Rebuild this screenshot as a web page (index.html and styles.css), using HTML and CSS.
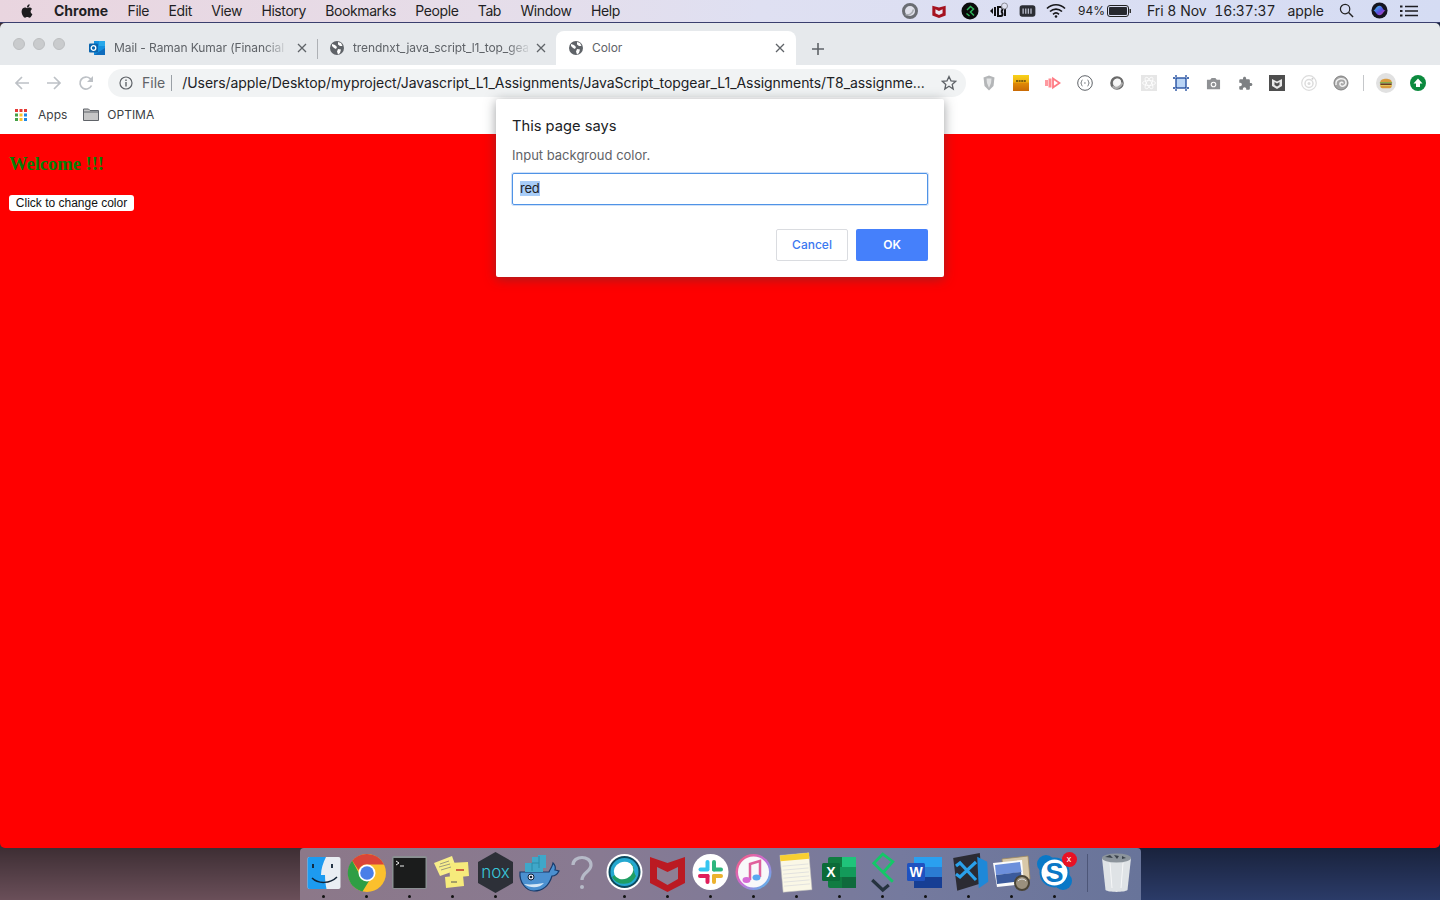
FILE: index.html
```html
<!DOCTYPE html>
<html lang="en">
<head>
<meta charset="utf-8">
<title>Color</title>
<link rel="stylesheet" href="styles.css">
</head>
<body>
<header class="menubar">
  <svg class="apple" viewBox="0 0 24 24" width="16" height="16"><path fill="#1c1c1e" d="M18.71 19.5c-.83 1.24-1.71 2.45-3.05 2.47-1.34.03-1.77-.79-3.29-.79-1.53 0-2 .77-3.27.82-1.31.05-2.3-1.32-3.14-2.53C4.25 17 2.94 12.45 4.7 9.39c.87-1.52 2.43-2.48 4.12-2.51 1.28-.02 2.5.87 3.29.87.78 0 2.26-1.07 3.81-.91.65.03 2.47.26 3.64 1.98-.09.06-2.17 1.28-2.15 3.81.03 3.02 2.65 4.03 2.68 4.04-.03.07-.42 1.44-1.38 2.83M13 3.5c.73-.83 1.94-1.46 2.94-1.5.13 1.17-.34 2.35-1.04 3.19-.69.85-1.83 1.51-2.95 1.42-.15-1.15.41-2.35 1.05-3.11z"/></svg>
  <nav class="menus">
    <span class="menu-app">Chrome</span><span>File</span><span>Edit</span><span>View</span><span>History</span><span>Bookmarks</span><span>People</span><span>Tab</span><span>Window</span><span>Help</span>
  </nav>
  <div class="status">
    <svg class="st st-ring" viewBox="0 0 18 18" width="18" height="18"><circle cx="9" cy="9" r="6.5" fill="#dfe0ea" stroke="#6a6d73" stroke-width="3"/><path d="M4.500 12.500c3 1 7-.5 8-5" fill="none" stroke="#a9acb2" stroke-width="1.500"/></svg>
    <svg class="st st-mc" viewBox="0 0 18 18" width="16" height="18"><path fill="#a5121f" d="M1.5 3 9 5l7.5-2v11L9 17l-7.5-3z"/><path fill="#e9e4f0" d="M5 7l4 2 4-2v4.500l-4 2-4-2z"/></svg>
    <svg class="st st-s" viewBox="0 0 18 18" width="18" height="18"><circle cx="9" cy="9" r="8.5" fill="#0b0b0b"/><path d="M6 8 9.500 4.500 12.500 7 9.500 10 13 13.500M5.500 11.500 8.500 14" fill="none" stroke="#2fb45a" stroke-width="1.500"/></svg>
    <svg class="st st-bt" viewBox="0 0 20 18" width="20" height="18"><path d="M1 9l3-3v6z" fill="#111"/><rect x="5" y="5" width="2" height="9" fill="#111"/><path d="M9 5h3c2 0 2 4 0 4.500 2 .5 2 4.500 0 4.500H9zM11 9.500v0" fill="none" stroke="#111" stroke-width="2"/><path d="M16 6v8" stroke="#111" stroke-width="2"/><circle cx="15.500" cy="4" r="3" fill="#dfe1f0" stroke="#8a8a94"/></svg>
    <svg class="st st-mem" viewBox="0 0 20 16" width="19" height="14"><rect x="1" y="1.500" width="18" height="13" rx="3" fill="#2b2d33"/><path d="M5 5v6M8 5v6M11 5v6M14 5v6" stroke="#b9bccb" stroke-width="1.500"/></svg>
    <svg class="st st-wifi" viewBox="0 0 20 15" width="20" height="15"><path d="M1 5.500c5-5 13-5 18 0M4 8.500c3.500-3.300 8.500-3.300 12 0M7 11.300c1.700-1.500 4.300-1.500 6 0" fill="none" stroke="#17171a" stroke-width="1.700"/><circle cx="10" cy="13.500" r="1.300" fill="#17171a"/></svg>
    <span class="st-pct">94%</span>
    <svg class="st st-bat" viewBox="0 0 24 12" width="24" height="12"><rect x=".5" y=".5" width="21" height="11" rx="2.500" fill="none" stroke="#222"/><rect x="2" y="2" width="18" height="8" rx="1" fill="#26282e"/><rect x="22.500" y="4" width="1.500" height="4" fill="#333"/></svg>
    <span class="st-date">Fri 8 Nov</span>
    <span class="st-time">16:37:37</span>
    <span class="st-user">apple</span>
    <svg class="st st-search" viewBox="0 0 16 16" width="15" height="15"><circle cx="6.500" cy="6.500" r="5" fill="none" stroke="#222" stroke-width="1.300"/><path d="M10.200 10.200 15 15" stroke="#222" stroke-width="1.500"/></svg>
    <svg class="st st-siri" viewBox="0 0 18 18" width="17" height="17"><defs><linearGradient id="siri" x1="0" y1="0" x2="1" y2="1"><stop offset="0" stop-color="#3fd0f0"/><stop offset=".55" stop-color="#5a50e0"/><stop offset="1" stop-color="#e23fa8"/></linearGradient></defs><circle cx="9" cy="9" r="8.500" fill="#15151f"/><path d="M2.500 9c2 0 3-5 6.500-5s3 5 6.500 5c-2 0-3 5-6.500 5s-4.500-5-6.500-5z" fill="url(#siri)"/></svg>
    <svg class="st st-list" viewBox="0 0 18 14" width="18" height="14"><path d="M5 2.500h13M5 7h13M5 11.500h13" stroke="#1d1d22" stroke-width="1.700"/><path d="M0 2.500h2.500M0 7h2.500M0 11.500h2.500" stroke="#1d1d22" stroke-width="1.900"/></svg>
  </div>
</header>

<main class="window">
  <div class="tabstrip">
    <div class="lights"><i></i><i></i><i></i></div>
    <div class="tab tab-first">
      <svg class="fav" viewBox="0 0 16 16" width="16" height="16"><rect x="5" y="1" width="11" height="14" fill="#1490df"/><rect x="10" y="1" width="6" height="5" fill="#28a8ea"/><path d="M5 15 16 8v7z" fill="#0f6cbd"/><rect y="3.500" width="9" height="9" rx="1" fill="#0a64ad"/><circle cx="4.500" cy="8" r="2.300" fill="none" stroke="#fff" stroke-width="1.300"/></svg>
      <span class="tab-title">Mail - Raman Kumar (Financial</span>
      <svg class="tab-x" viewBox="0 0 10 10" width="10" height="10"><path d="M1 1l8 8M9 1 1 9"/></svg>
    </div>
    <div class="tab tab-sep">
      <svg class="fav" viewBox="0 0 16 16" width="16" height="16"><circle cx="8" cy="8" r="7" fill="#5f6368"/><path d="M3 4l3 1 2 2-1 2-2-1-2-2zM9 9l3 .5-1 3.500-2 1.500-1-3zM9 2l3 1 1.500 3H11L9 4.500z" fill="#fff"/></svg>
      <span class="tab-title">trendnxt_java_script_l1_top_gea</span>
      <svg class="tab-x" viewBox="0 0 10 10" width="10" height="10"><path d="M1 1l8 8M9 1 1 9"/></svg>
    </div>
    <div class="tab tab-active">
      <svg class="fav" viewBox="0 0 16 16" width="16" height="16"><circle cx="8" cy="8" r="7" fill="#5f6368"/><path d="M3 4l3 1 2 2-1 2-2-1-2-2zM9 9l3 .5-1 3.500-2 1.500-1-3zM9 2l3 1 1.500 3H11L9 4.500z" fill="#fff"/></svg>
      <span class="tab-title tab-title-full">Color</span>
      <svg class="tab-x" viewBox="0 0 10 10" width="10" height="10"><path d="M1 1l8 8M9 1 1 9"/></svg>
    </div>
    <svg class="newtab" viewBox="0 0 12 12" width="12" height="12"><path d="M6 0v12M0 6h12" stroke="#5f6368" stroke-width="1.600"/></svg>
  </div>

  <div class="toolbar">
    <svg class="nav" viewBox="0 0 16 16" width="16" height="16"><path d="M15 8H2M8 2 2 8l6 6" fill="none" stroke="#bdc1c6" stroke-width="1.700"/></svg>
    <svg class="nav" viewBox="0 0 16 16" width="16" height="16"><path d="M1 8h13M8 2l6 6-6 6" fill="none" stroke="#bdc1c6" stroke-width="1.700"/></svg>
    <svg class="nav" viewBox="0 0 16 16" width="16" height="16"><path d="M13.500 10.500A6 6 0 1 1 12.200 3.700L14 5.500" fill="none" stroke="#bdc1c6" stroke-width="1.700"/><path d="M15 1v6H9z" fill="#bdc1c6"/></svg>
    <div class="omnibox">
      <svg class="info" viewBox="0 0 14 14" width="14" height="14"><circle cx="7" cy="7" r="6" fill="none" stroke="#5f6368" stroke-width="1.200"/><path d="M7 6v4.500M7 3.500v1.500" stroke="#5f6368" stroke-width="1.400"/></svg>
      <span class="scheme">File</span>
      <span class="url">/Users/apple/Desktop/myproject/Javascript_L1_Assignments/JavaScript_topgear_L1_Assignments/T8_assignme...</span>
      <svg class="star" viewBox="0 0 16 16" width="16" height="16"><path d="M8 1.500l2 4.300 4.700.5-3.500 3.200 1 4.600L8 11.300l-4.200 2.800 1-4.600L1.300 6.300 6 5.800z" fill="none" stroke="#5f6368" stroke-width="1.300"/></svg>
    </div>
    <div class="exts">
      <span class="ext"><svg viewBox="0 0 16 16" width="16" height="16"><path d="M2.500 2.500 8 .5l5.500 2-1 8.500L8 15.500 3.500 11z" fill="#b4b6b8"/><path d="M5.500 3.500h5l-.5 4.500L8 13 6 8z" fill="#e2e3e4"/></svg></span>
      <span class="ext"><svg viewBox="0 0 16 16" width="16" height="16"><defs><linearGradient id="dor" x1="0" y1="0" x2="0" y2="1"><stop offset="0" stop-color="#f7d21a"/><stop offset=".45" stop-color="#f0b010"/><stop offset=".5" stop-color="#e08a08"/><stop offset="1" stop-color="#c96a05"/></linearGradient></defs><rect width="16" height="16" fill="url(#dor)"/><path d="M3 6h10" stroke="#5a4210" stroke-width="1.600" stroke-dasharray="2 .6"/></svg></span>
      <span class="ext"><svg viewBox="0 0 16 16" width="16" height="16"><path d="M0 5h3v6H0z" fill="#ff9aa0"/><path d="M3.500 3.500h3v9h-3z" fill="#ff8b92"/><path d="M8 3.500l6.500 4.500L8 12.500z" fill="none" stroke="#ff7b84" stroke-width="1.800"/></svg></span>
      <span class="ext"><svg viewBox="0 0 16 16" width="16" height="16"><circle cx="8" cy="8" r="7.300" fill="none" stroke="#5f6368" stroke-width="1"/><path d="M5.500 5C4 5 5 8 3.700 8 5 8 4 11 5.500 11M10.500 5C12 5 11 8 12.300 8 11 8 12 11 10.500 11" fill="none" stroke="#5f6368" stroke-width=".9"/><path d="M7 8h2" stroke="#5f6368" stroke-dasharray=".8 .6"/></svg></span>
      <span class="ext"><svg viewBox="0 0 16 16" width="16" height="16"><circle cx="8" cy="8" r="5.500" fill="#eee" stroke="#6a6a6a" stroke-width="2.600"/><path d="M3.500 11.500c3 3 8.500 1 9.500-4" fill="none" stroke="#adadad" stroke-width="2.200"/><circle cx="8.500" cy="7" r="3.500" fill="#f7f7f7"/></svg></span>
      <span class="ext"><svg viewBox="0 0 16 16" width="16" height="16"><rect width="16" height="16" fill="#e6e6e6"/><g fill="none" stroke="#fff" stroke-width=".8"><ellipse cx="8" cy="8" rx="6.500" ry="2.500"/><ellipse cx="8" cy="8" rx="6.500" ry="2.500" transform="rotate(60 8 8)"/><ellipse cx="8" cy="8" rx="6.500" ry="2.500" transform="rotate(120 8 8)"/></g></svg></span>
      <span class="ext"><svg viewBox="0 0 16 16" width="16" height="16"><rect x="3" y="3" width="10" height="10" fill="#b9d4f5" stroke="#17459b" stroke-width="1.300"/><path d="M3 0v2M13 0v2M3 14v2M13 14v2M0 3h2M14 3h2M0 13h2M14 13h2" stroke="#17459b" stroke-width="1.300"/></svg></span>
      <span class="ext"><svg viewBox="0 0 16 16" width="15" height="15"><path d="M1 4h3.500L6 2h4l1.500 2H15v10H1z" fill="#8f9194"/><circle cx="8" cy="9" r="3" fill="#fff"/><circle cx="8" cy="9" r="1.800" fill="#8f9194"/></svg></span>
      <span class="ext"><svg viewBox="0 0 24 24" width="15" height="15"><path fill="#7d8083" d="M20.500 11H19V7c0-1.100-.9-2-2-2h-4V3.500C13 2.120 11.880 1 10.500 1S8 2.120 8 3.500V5H4c-1.100 0-1.990.9-1.990 2v3.800H3.500c1.490 0 2.700 1.210 2.700 2.700s-1.210 2.700-2.700 2.700H2V20c0 1.100.9 2 2 2h3.800v-1.500c0-1.490 1.210-2.700 2.700-2.700 1.490 0 2.700 1.210 2.700 2.700V22H17c1.100 0 2-.9 2-2v-4h1.500c1.380 0 2.500-1.120 2.500-2.500S21.880 11 20.500 11z"/></svg></span>
      <span class="ext"><svg viewBox="0 0 16 16" width="16" height="16"><rect width="16" height="16" fill="#4e4e4e"/><path d="M3 4l5 2.500L13 4v7l-5 3-5-3z" fill="#e8e8e8"/><path d="M5.500 7 8 8.500 10.500 7v3L8 11.500 5.500 10z" fill="#4e4e4e"/></svg></span>
      <span class="ext"><svg viewBox="0 0 16 16" width="16" height="16"><circle cx="8" cy="8" r="7.300" fill="#fff" stroke="#dcdcdc" stroke-width="1.200"/><circle cx="8" cy="8.500" r="4" fill="none" stroke="#dcdcdc" stroke-width="1.500"/><circle cx="8" cy="8.500" r="1.500" fill="#dcdcdc"/><circle cx="11.500" cy="3.800" r="1" fill="#cfcfcf"/></svg></span>
      <span class="ext"><svg viewBox="0 0 16 16" width="16" height="16"><circle cx="8" cy="8" r="7" fill="#a6a6a6" stroke="#808080" stroke-width="1"/><path d="M3 10c-1-7 9-8.500 10-3 .5 4-5 6-6 2.500-.5-2.500 3-3 3-1" fill="none" stroke="#f2f2f2" stroke-width="1.500"/></svg></span>
      <i class="ext-sep"></i>
      <span class="avatar"><svg viewBox="0 0 16 16" width="14" height="14"><path d="M1.500 7C1.500 2 14.500 2 14.500 7z" fill="#d99a3c"/><rect x="1" y="7" width="14" height="1.500" fill="#7ba83a"/><rect x="1.500" y="8.500" width="13" height="2" fill="#6b3c1e"/><rect x="1" y="10.500" width="14" height="1" fill="#e8c340"/><path d="M1.500 11.500h13c0 2-1.500 2.500-2 2.500H3.500c-.5 0-2-.5-2-2.500z" fill="#d99a3c"/></svg></span>
      <span class="ext ext-up"><svg viewBox="0 0 16 16" width="16" height="16"><circle cx="8" cy="8" r="8" fill="#0c8a3e"/><path d="M8 3.500 12.500 8.500H10V12H6V8.500H3.500z" fill="#fff"/></svg></span>
    </div>
  </div>

  <div class="bookmarks">
    <svg class="apps" viewBox="0 0 12 12" width="12" height="12"><rect width="3" height="3" fill="#e53935"/><rect x="4.500" width="3" height="3" fill="#e53935"/><rect x="9" width="3" height="3" fill="#e53935"/><rect y="4.500" width="3" height="3" fill="#43a047"/><rect x="4.500" y="4.500" width="3" height="3" fill="#fbc02d"/><rect x="9" y="4.500" width="3" height="3" fill="#1e88e5"/><rect y="9" width="3" height="3" fill="#43a047"/><rect x="4.500" y="9" width="3" height="3" fill="#fbc02d"/><rect x="9" y="9" width="3" height="3" fill="#1e88e5"/></svg>
    <span class="bm-apps">Apps</span>
    <svg class="folder" viewBox="0 0 16 13" width="16" height="13"><path d="M.5 12.500V1h5l1.500 1.500h8.500v10z" fill="#c6c6c6" stroke="#5f6368"/><path d="M.5 4h15" stroke="#5f6368"/></svg>
    <span>OPTIMA</span>
  </div>

  <section class="page">
    <h3 class="welcome">Welcome !!!</h3>
    <button class="change" type="button">Click to change color</button>
  </section>

  <div class="dialog" role="dialog">
    <div class="dlg-title">This page says</div>
    <div class="dlg-msg">Input backgroud color.</div>
    <div class="dlg-input"><span class="sel">red</span></div>
    <div class="dlg-btns">
      <button class="btn btn-cancel" type="button">Cancel</button>
      <button class="btn btn-ok" type="button">OK</button>
    </div>
  </div>
</main>

<footer class="desktop">
  <div class="dock">
    <div class="di"><svg viewBox="0 0 43 44" width="43" height="44"><rect x="5.500" y="6" width="33" height="32" rx="2" fill="#e9eef3"/><path d="M7.500 6H24c-3 6-5 12-5 18h4c0 5 .5 9 1.500 14H7.500a2 2 0 0 1-2-2V8a2 2 0 0 1 2-2z" fill="#1d9bf0"/><path d="M11 13v4M30 13v4" stroke="#123" stroke-width="1.800"/><path d="M10 27c6 6 18 6 25-1" fill="none" stroke="#123" stroke-width="1.500"/></svg><b></b></div>
    <div class="di"><svg viewBox="0 0 43 44" width="43" height="44"><circle cx="22" cy="22" r="19" fill="#fbc02d"/><path d="M22 3a19 19 0 0 1 17 10.500H22a9 9 0 0 0-8.500 5.500L7.200 9.800A19 19 0 0 1 22 3z" fill="#db4437"/><path d="M7.200 9.800 15.500 25a8 8 0 0 0 8.500 5L17.500 40.500A19 19 0 0 1 7.200 9.800z" fill="#2f9e44"/><circle cx="22" cy="22" r="8.500" fill="#fff"/><circle cx="22" cy="22" r="6.800" fill="#4a7fe8"/></svg><b></b></div>
    <div class="di"><svg viewBox="0 0 43 44" width="43" height="44"><rect x="4" y="5" width="35" height="33" rx="2" fill="#8b8f92"/><rect x="5.500" y="7" width="32" height="30" fill="#1b1c1c"/><path d="M8 10l3 2-3 2" fill="none" stroke="#eee" stroke-width="1"/><path d="M12 15h4" stroke="#eee"/></svg><b></b></div>
    <div class="di"><svg viewBox="0 0 43 44" width="43" height="44"><path d="M3 12 21 5l5 14-17 6z" fill="#f8ee8a"/><path d="M18 12l19-1 1 14-19 2z" fill="#f6eb7c"/><path d="M14 26l18-2 1 11-18 2z" fill="#f6eb7c"/><path d="M9 13l9-3M8 16l11-3M10 19l10-3" stroke="#777" stroke-width=".7"/><path d="M25 19h8" stroke="#c0392b" stroke-width="1.500"/><path d="M20 31h6" stroke="#555"/></svg><b></b></div>
    <div class="di"><svg viewBox="0 0 43 44" width="43" height="44"><path d="M21.500 1 39 11v21L21.500 42 4 32V11z" fill="#2d3038"/><text class="t-nox" x="21.500" y="26.500" text-anchor="middle">nox</text></svg><b></b></div>
    <div class="di"><svg viewBox="0 0 43 44" width="43" height="44"><path d="M3 21h29c1-3 3-4 4-9 2 2 3 4 2 7 2 0 3 1 4 1-2 4-5 5-7 5-3 10-10 15-18 15S2 31 3 21z" fill="#4b90d0" stroke="#183b6c" stroke-width="1.200"/><path d="M7 33c7 5 16 4 20-1-6 1-14 2-20 1z" fill="#d5e7f5"/><path d="M8 12h7V6h6V4h8v13h-3v4H8z" fill="#3fa7c9"/><path d="M15 12h7M22 5v12M15 12v8" stroke="#2b8aa8"/><circle cx="14" cy="26" r="3" fill="#eef" stroke="#123"/><circle cx="14" cy="26" r="1.300" fill="#123"/></svg><b class="nod"></b></div>
    <div class="di"><svg viewBox="0 0 43 44" width="43" height="44"><path d="M13 14c0-10 18-10 18 0 0 7-9 7-9 15" fill="none" stroke="#b6bac8" stroke-width="3.200"/><circle cx="22" cy="36" r="2" fill="#b6bac8"/></svg><b class="nod"></b></div>
    <div class="di"><svg viewBox="0 0 43 44" width="43" height="44"><circle cx="21.500" cy="21" r="18" fill="#fff"/><circle cx="21.500" cy="21" r="16" fill="#0d4a5e"/><circle cx="21.500" cy="21" r="14" fill="#24a8d0"/><path d="M9 26a13.500 13.500 0 0 0 24-1c-3-4-1-9-5-13z" fill="#1f9e63"/><ellipse cx="20.500" cy="19.500" rx="10" ry="8.500" fill="#fff" transform="rotate(-25 20.500 19.500)"/></svg><b></b></div>
    <div class="di"><svg viewBox="0 0 43 44" width="43" height="44"><path d="M4 6l17.500 6L39 6v26l-17.500 9L4 32z" fill="#bb1a22"/><path d="M11 16l10.500 5L32 16v12l-10.500 6L11 28z" fill="#8d7f95"/></svg><b></b></div>
    <div class="di"><svg viewBox="0 0 43 44" width="43" height="44"><circle cx="21.500" cy="21" r="18" fill="#fff"/><g stroke-width="4" stroke-linecap="round"><path d="M18.500 11v6" stroke="#36c5f0"/><path d="M25 11v7.500" stroke="#2eb67d"/><path d="M11.500 18.500h7" stroke="#36c5f0"/><path d="M25 18.500h7" stroke="#2eb67d"/><path d="M11 25h7.500" stroke="#e01e5a"/><path d="M25 25h7" stroke="#ecb22e"/><path d="M18.500 25v6" stroke="#e01e5a"/><path d="M25 25v6" stroke="#ecb22e"/></g></svg><b></b></div>
    <div class="di"><svg viewBox="0 0 43 44" width="43" height="44"><defs><linearGradient id="itg" x1="0" y1="0" x2="1" y2="1"><stop offset="0" stop-color="#fb5c74"/><stop offset=".5" stop-color="#c86dd7"/><stop offset="1" stop-color="#3ec8f0"/></linearGradient></defs><circle cx="21.500" cy="21" r="18" fill="url(#itg)"/><circle cx="21.500" cy="21" r="15.500" fill="#f8f8fa"/><path d="M18 29V13l10-3v16" fill="none" stroke="#e0609c" stroke-width="2.500"/><ellipse cx="14.500" cy="29" rx="4" ry="3" fill="#d66bd6"/><ellipse cx="24.500" cy="26.500" rx="4" ry="3" fill="#5aa8f0"/></svg><b></b></div>
    <div class="di"><svg viewBox="0 0 43 44" width="43" height="44"><g transform="rotate(-5 21.500 22)"><rect x="6.500" y="3" width="29" height="37" fill="#faf7e6" stroke="#bbb" stroke-width=".5"/><rect x="6.500" y="3" width="29" height="6" fill="#f8cf32"/><path d="M8 14h26M8 18h26M8 22h26M8 26h26M8 30h26M8 34h26" stroke="#ddd" stroke-width=".8"/></g></svg><b></b></div>
    <div class="di"><svg viewBox="0 0 43 44" width="43" height="44"><rect x="10" y="6" width="28" height="31" rx="2" fill="#107c41"/><rect x="24" y="6" width="14" height="10" fill="#1fc47a"/><rect x="10" y="16" width="28" height="10" fill="#139a5a"/><rect x="24" y="26" width="14" height="11" fill="#0f6a3c"/><rect x="4" y="12" width="18" height="18" rx="1.500" fill="#0b6b38"/><text class="t-xl" x="13" y="26" text-anchor="middle">X</text></svg><b></b></div>
    <div class="di"><svg viewBox="0 0 43 44" width="43" height="44"><path d="M31.800 30.700 12.800 12.300 21.800 3l10 7.700-9 10" fill="none" stroke="#14c767" stroke-width="2.800"/><path d="M11.200 29l10.600 10 6-5" fill="none" stroke="#26333f" stroke-width="3.200"/></svg><b></b></div>
    <div class="di"><svg viewBox="0 0 43 44" width="43" height="44"><rect x="10" y="6" width="28" height="31" rx="2" fill="#2b7cd3"/><rect x="10" y="6" width="28" height="10" fill="#2aa0f0"/><rect x="10" y="26" width="28" height="11" fill="#163e94"/><rect x="3" y="12" width="18" height="18" rx="1.500" fill="#1f52c0"/><text class="t-xl" x="12" y="26" text-anchor="middle">W</text></svg><b></b></div>
    <div class="di"><svg viewBox="0 0 43 44" width="43" height="44"><path d="M6.200 7 32.800 2 35.200 32 10.200 39.700z" fill="#2b2b33"/><path d="M30.200 5.700 40.200 10.700 41.200 30.700 31.800 37.300z" fill="#1e88d8"/><path d="M29 11 13 26l-4-3M9 15l4-3 16 17" fill="none" stroke="#2aa0ea" stroke-width="3.200"/></svg><b></b></div>
    <div class="di"><svg viewBox="0 0 43 44" width="43" height="44"><path d="M12 8 38 5l2 23-26 3z" fill="#d8c8a8" stroke="#a08a60" stroke-width=".8"/><path d="M3 12 32 9l2 24-27 3z" fill="#fbfbfb"/><path d="M5 14l25-3 1.500 10L6 24z" fill="#6d8fdb"/><path d="M6 24l25-3 1 9-25 3z" fill="#3b5a9c"/><circle cx="32" cy="32" r="7" fill="#9a907d" stroke="#4a4436" stroke-width="2"/><path d="M28 30a5 5 0 0 1 8 0" stroke="#ddd" fill="none"/></svg><b></b></div>
    <div class="di"><svg viewBox="0 0 43 44" width="43" height="44"><circle cx="13" cy="13" r="9" fill="#0a78c7"/><circle cx="30" cy="30" r="9" fill="#0a78c7"/><circle cx="21.500" cy="21.500" r="15" fill="#0a78c7"/><circle cx="21.500" cy="21.500" r="13" fill="#fff"/><text class="t-sk" x="21.500" y="31" text-anchor="middle">S</text></svg><b></b><span class="badge">x</span></div>
    <i class="dock-sep"></i>
    <div class="di"><svg viewBox="0 0 43 44" width="43" height="44"><path d="M7 7h29l-3.500 32c-3 2.500-19 2.500-22 0z" fill="#dfe3e6"/><ellipse cx="21.500" cy="7" rx="14.500" ry="4.500" fill="#8c949c"/><path d="M10 6l5-2 3 3zM19 4l5 1-2 3zM27 5l4 2-4 1z" fill="#39414a"/><path d="M15 12l2 25M28 12l-2 25" stroke="#f6f7f8" stroke-width="1"/></svg><b class="nod"></b></div>
  </div>
</footer>
</body>
</html>
```

FILE: styles.css
```css
* { box-sizing: border-box; }
html, body { margin: 0; padding: 0; }
body {
  width: 1440px;
  height: 900px;
  overflow: hidden;
  display: flex;
  flex-direction: column;
  font-family: Inter, "Noto Sans", sans-serif;
  background:
    linear-gradient(180deg, rgba(0,0,0,.42) 848px, rgba(0,0,0,0) 900px),
    linear-gradient(90deg, #6a4f59 0, #6a4f59 300px, #2b3b68 1140px, #2b3b68 100%);
}
svg { display: block; flex: none; }

/* menu bar */
.menubar {
  height: 23px;
  flex: none;
  display: flex;
  align-items: center;
  padding: 0 22px 1px 19px;
  border-bottom: 1px solid #3a3f6e;
  background: linear-gradient(90deg, #e9d5df 0, #e6dde9 480px, #dfe0f2 760px, #d5dcf3 100%);
  font-size: 14px;
  color: #1f1f24;
}
.menus { display: flex; margin-left: 19px; gap: 19.400px; letter-spacing: -.41px; }
.menu-app { font-weight: 700; letter-spacing: 0; }
.status { display: flex; align-items: center; margin-left: auto; }
.st-ring { margin-right: 12px; }
.st-mc { margin-right: 14px; }
.st-s { margin-right: 10px; }
.st-bt { margin-right: 9px; }
.st-mem { margin-right: 9px; }
.st-wifi { margin-right: 12px; }
.st-pct { font-size: 12px; margin-right: 2px; }
.st-bat { margin-right: 16px; }
.st-date { margin-right: 7.500px; }
.st-time { margin-right: 12px; font-variant-numeric: tabular-nums; letter-spacing: -.1px; }
.st-user { margin-right: 15px; }
.st-search { margin-right: 17px; }
.st-siri { margin-right: 12px; }

/* browser window */
.window {
  position: relative;
  height: 825px;
  flex: none;
  display: flex;
  flex-direction: column;
  border-radius: 5px;
  overflow: hidden;
}
.tabstrip {
  height: 42px;
  flex: none;
  display: flex;
  align-items: flex-end;
  padding-left: 13px;
  background: #e6e9ec;
}
.lights { display: flex; gap: 8px; width: 63px; align-self: flex-start; padding-top: 15px; }
.lights i { width: 12px; height: 12px; border-radius: 50%; background: #c9cbcd; border: 1px solid #bcbec0; }
.tab {
  position: relative;
  width: 240px;
  height: 34px;
  display: flex;
  align-items: center;
  padding: 0 10px 0 13px;
  font-size: 12px;
  letter-spacing: -.08px;
  color: #5f6368;
}
.tab-first { padding-right: 9px; }
.tab-sep::before {
  content: "";
  position: absolute;
  left: 1px;
  top: 8px;
  width: 1px;
  height: 20px;
  background: #aeb1b5;
}
.tab-active { background: #fff; border-radius: 8px 8px 0 0; padding: 0 11px 0 12px; }
.tab .fav { margin: 0 8px 0 0; }
.tab-first .fav { margin-right: 9px; }
.tab-title {
  flex: 1;
  padding-bottom: 2px;
  white-space: nowrap;
  overflow: hidden;
  -webkit-mask-image: linear-gradient(90deg, #000 88%, rgba(0,0,0,.15));
  mask-image: linear-gradient(90deg, #000 88%, rgba(0,0,0,.15));
}
.tab-title-full { -webkit-mask-image: none; mask-image: none; }
.tab-x { margin-left: 12px; fill: none; stroke: #5f6368; stroke-width: 1.300; }
.tab-sep .tab-x { margin-left: 8px; }
.newtab { margin: 0 0 10px 16px; }

.toolbar {
  height: 34px;
  flex: none;
  display: flex;
  align-items: center;
  background: #fff;
  padding: 2px 0 0 14px;
}
.nav { margin-right: 16px; }
.nav:nth-child(3) { margin-right: 14px; }
.omnibox {
  width: 858px;
  height: 28px;
  flex: none;
  display: flex;
  align-items: center;
  padding: 0 9px 0 11px;
  border-radius: 14px;
  background: #f1f3f4;
  font-size: 14px;
}
.info { margin-right: 9px; }
.scheme { color: #5f6368; padding-right: 6px; border-right: 1px solid #9aa0a6; line-height: 16px; margin-right: 10px; }
.url { flex: 1; padding-bottom: 2px; color: #202124; white-space: nowrap; overflow: hidden; letter-spacing: -.06px; }
.exts { display: flex; align-items: center; margin-left: 7px; }
.ext { width: 32px; height: 32px; display: flex; align-items: center; justify-content: center; flex: none; }
.ext-sep { width: 1px; height: 16px; background: #c5c7ca; margin: 0 6px 0 6px; flex: none; }
.avatar { width: 20px; height: 20px; border-radius: 50%; background: #e1e1e1; display: flex; align-items: center; justify-content: center; margin: 0 0 0 6px; flex: none; }
.ext-up { margin-left: 6px; }

.bookmarks {
  height: 35px;
  flex: none;
  display: flex;
  align-items: center;
  padding: 0 0 4px 15px;
  background: #fff;
  font-size: 12px;
  color: #3c4043;
}
.apps { margin-right: 11px; }
.bm-apps { margin-right: 16px; }
.folder { margin-right: 8px; }

.page {
  flex: 1;
  background: #f00;
  padding: 20px 9px 0;
}
.welcome {
  margin: 0 0 21px;
  font: 700 18.500px/20px "Liberation Serif", serif;
  color: #068006;
}
.change {
  display: block;
  width: 125px;
  height: 16px;
  padding: 0;
  border: 0;
  border-radius: 3px;
  background: #fff;
  font: 12px/16px "Liberation Sans", Arial, sans-serif;
  color: #111;
}

/* dialog */
.dialog {
  position: absolute;
  left: 496px;
  top: 76px;
  width: 448px;
  height: 178px;
  padding: 18px 16px 16px;
  display: flex;
  flex-direction: column;
  background: #fff;
  border-radius: 2px;
  box-shadow: 0 2px 12px rgba(60,64,67,.5);
}
.dlg-title { font-size: 14.700px; line-height: 18px; color: #202124; }
.dlg-msg { margin-top: 12px; font-size: 13px; line-height: 16px; color: #5f6368; }
.dlg-input {
  margin-top: 10px;
  height: 32px;
  padding: 0 7px 1px;
  display: flex;
  align-items: center;
  border: 1px solid #4f93e6;
  box-shadow: 0 0 0 1px rgba(120,170,235,.35);
  border-radius: 2px;
  font-size: 13px;
  letter-spacing: -.2px;
  color: #202124;
}
.sel { background: #a8cdf8; line-height: 15px; }
.dlg-btns { margin-top: auto; display: flex; justify-content: flex-end; gap: 8px; }
.btn { width: 72px; height: 32px; padding: 0 0 2px; border-radius: 2px; font: 600 12px Inter, sans-serif; }
.btn-cancel { background: #fff; border: 1px solid #dadce0; color: #3b78f0; font-weight: 500; }
.btn-ok { background: #4580fb; border: 0; color: #fff; }

/* dock */
.desktop { flex: 1; display: flex; justify-content: center; }
.dock {
  width: 841px;
  height: 52px;
  display: flex;
  padding: 3px 0 0 2px;
  border-radius: 4px 4px 0 0;
  background: linear-gradient(90deg, #8c7889 0, #887a92 300px, #757a9e 600px, #68749a 100%);
}
.di { position: relative; width: 43px; height: 49px; flex: none; }
.di b { display: block; width: 3px; height: 3px; margin: 0 auto; border-radius: 50%; background: #111; }
.di b.nod { background: transparent; }
.dock-sep { width: 1px; height: 38px; margin: 3px 7px 0 11px; background: #4d5678; flex: none; }
.badge {
  position: absolute;
  left: 29px;
  top: 1px;
  width: 15px;
  height: 15px;
  border-radius: 50%;
  background: #e81123;
  color: #fff;
  font-size: 9px;
  line-height: 14px;
  text-align: center;
}
.t-nox { font: 300 17px Inter, sans-serif; fill: #39c6d8; }
.t-xl { font: 700 14px "Liberation Sans", sans-serif; fill: #fff; }
.t-sk { font: 700 27px "Liberation Sans", sans-serif; fill: #0a78c7; }
```
